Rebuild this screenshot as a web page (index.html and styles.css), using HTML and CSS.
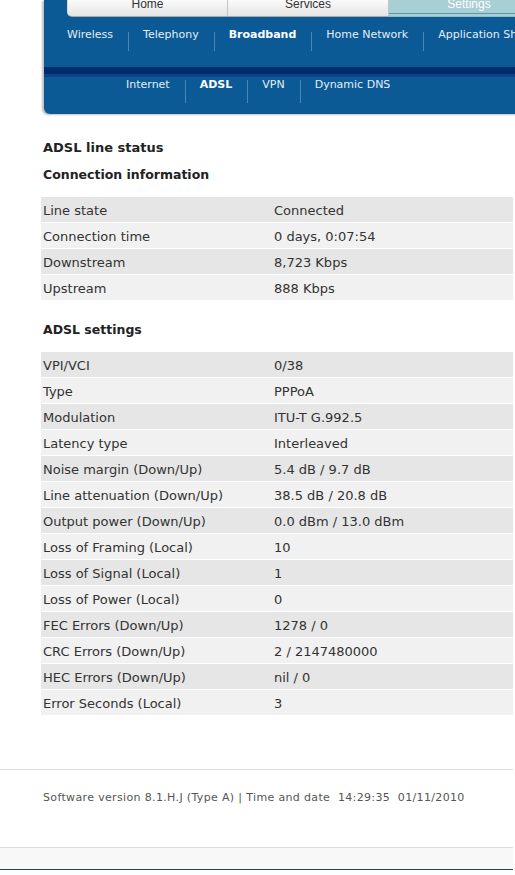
FILE: index.html
```html
<!DOCTYPE html>
<html lang="en">
<head>
    <meta charset="UTF-8" />
    <title>ADSL line status</title>
    <link rel="stylesheet" href="styles.css">
</head>
<body>
    <div class="page">
        <div class="header">
            <div class="tabs">
                <div class="tab tab-first">Home</div>
                <div class="tab">Services</div>
                <div class="tab tab-active">Settings</div>
            </div>
            <ul class="nav nav-main">
                <li>Wireless</li>
                <li>Telephony</li>
                <li class="active">Broadband</li>
                <li>Home Network</li>
                <li>Application Sharing</li>
            </ul>
            <div class="stripe"></div>
            <ul class="nav nav-sub">
                <li>Internet</li>
                <li class="active">ADSL</li>
                <li>VPN</li>
                <li>Dynamic DNS</li>
            </ul>
        </div>

        <div class="content">
            <h1>ADSL line status</h1>
            <h2>Connection information</h2>
            <table class="status">
                <tr><td>Line state</td><td>Connected</td></tr>
                <tr><td>Connection time</td><td>0 days, 0:07:54</td></tr>
                <tr><td>Downstream</td><td>8,723 Kbps</td></tr>
                <tr><td>Upstream</td><td>888 Kbps</td></tr>
            </table>

            <h2 class="second">ADSL settings</h2>
            <table class="status">
                <tr><td>VPI/VCI</td><td>0/38</td></tr>
                <tr><td>Type</td><td>PPPoA</td></tr>
                <tr><td>Modulation</td><td>ITU-T G.992.5</td></tr>
                <tr><td>Latency type</td><td>Interleaved</td></tr>
                <tr><td>Noise margin (Down/Up)</td><td>5.4 dB / 9.7 dB</td></tr>
                <tr><td>Line attenuation (Down/Up)</td><td>38.5 dB / 20.8 dB</td></tr>
                <tr><td>Output power (Down/Up)</td><td>0.0 dBm / 13.0 dBm</td></tr>
                <tr><td>Loss of Framing (Local)</td><td>10</td></tr>
                <tr><td>Loss of Signal (Local)</td><td>1</td></tr>
                <tr><td>Loss of Power (Local)</td><td>0</td></tr>
                <tr><td>FEC Errors (Down/Up)</td><td>1278 / 0</td></tr>
                <tr><td>CRC Errors (Down/Up)</td><td>2 / 2147480000</td></tr>
                <tr><td>HEC Errors (Down/Up)</td><td>nil / 0</td></tr>
                <tr><td>Error Seconds (Local)</td><td>3</td></tr>
            </table>
        </div>

        <div class="footer">
            Software version 8.1.H.J (Type A) | Time and date &nbsp;14:29:35 &nbsp;01/11/2010
        </div>
        <div class="bottom"></div>
    </div>
</body>
</html>
```

FILE: styles.css
```css
html, body {
    overflow: hidden;
}
body {
    margin: 0;
    font-family: "DejaVu Sans", Verdana, sans-serif;
    color: #333;
    background: #fff;
}
.page {
    width: 513px;
}

/* blue header panel */
.header {
    margin-left: 44px;
    width: 520px;
    height: 114px;
    background-color: #0b5a95;
    border-bottom-left-radius: 6px;
    box-shadow: -2px 1px 2px rgba(0, 0, 0, 0.25);
}
.tabs {
    display: flex;
    padding-left: 23px;
    height: 17px;
}
.tab {
    flex: 0 0 160px;
    height: 16px;
    line-height: 9px;
    overflow: hidden;
    text-align: center;
    font-family: "Liberation Sans", Arial, sans-serif;
    font-size: 12px;
    color: #333;
    background: linear-gradient(#fbfbfb, #e4e4e4);
    border-right: 1px solid #c4c4c4;
    border-bottom: 1px solid #a9a9a9;
}
.tab-first {
    border-left: 1px solid #d8d8d8;
    border-bottom-left-radius: 5px;
    flex-basis: 159px;
}
.tab-active {
    color: #fff;
    border-right: none;
    border-bottom-color: #93bcc6;
    background: linear-gradient(#a8ced6 13px, #5e97aa 13px, #5e97aa 14px, #a8ced6 14px);
}

.nav {
    list-style: none;
    margin: 0;
    padding: 0;
    display: flex;
    white-space: nowrap;
    font-size: 11px;
    color: #e4edf6;
}
.nav li {
    padding: 0 15px;
    line-height: 14px;
}
.nav li:first-child {
    background: none;
}
.nav .active {
    font-weight: bold;
    color: #fff;
}
.nav-main {
    margin-top: 11px;
    padding-left: 8px;
}
.nav-main li {
    height: 24px;
    background: linear-gradient(#4d84b6, #4d84b6) left 4px / 1px 19px no-repeat;
}
.stripe {
    margin-top: 15px;
    height: 10px;
    background: linear-gradient(#002c6c 7px, #0f4386 7px);
}
.nav-sub {
    margin-top: 1px;
    padding-left: 67px;
}
.nav-sub li {
    height: 26px;
    background: linear-gradient(#4d84b6, #4d84b6) left 2px / 1px 23px no-repeat;
}

/* status content */
.content {
    margin-left: 41px;
    width: 472px;
}
h1, h2 {
    margin: 0;
    padding-left: 2px;
    line-height: 16px;
    font-weight: bold;
    color: #222;
}
h1 {
    font-size: 13px;
    margin-top: 26px;
    margin-bottom: 11px;
}
h2 {
    font-size: 12.5px;
    margin-bottom: 14px;
}
h2.second {
    margin-top: 21px;
}
table.status {
    width: 472px;
    border-collapse: collapse;
    table-layout: fixed;
    font-size: 13px;
    color: #333;
}
table.status td {
    height: 24px;
    padding: 1px 0 0 2px;
    border-bottom: 1px solid #fff;
    vertical-align: middle;
    white-space: nowrap;
}
table.status td:first-child {
    width: 229px;
}
table.status tr:nth-child(odd) td {
    background-color: #e6e6e6;
}
table.status tr:nth-child(even) td {
    background-color: #f1f1f1;
}

/* footer */
.footer {
    margin-top: 53px;
    border-top: 1px solid #dcdcdc;
    border-bottom: 1px solid #dcdcdc;
    padding: 21px 0 42px 43px;
    line-height: 14px;
    font-size: 11px;
    letter-spacing: 0.35px;
    color: #555;
}
.bottom {
    height: 21px;
    background-color: #f8f8f8;
    border-bottom: 1px solid #1f3d6f;
    box-shadow: 0 6px 0 #b9d5ee;
}
```
